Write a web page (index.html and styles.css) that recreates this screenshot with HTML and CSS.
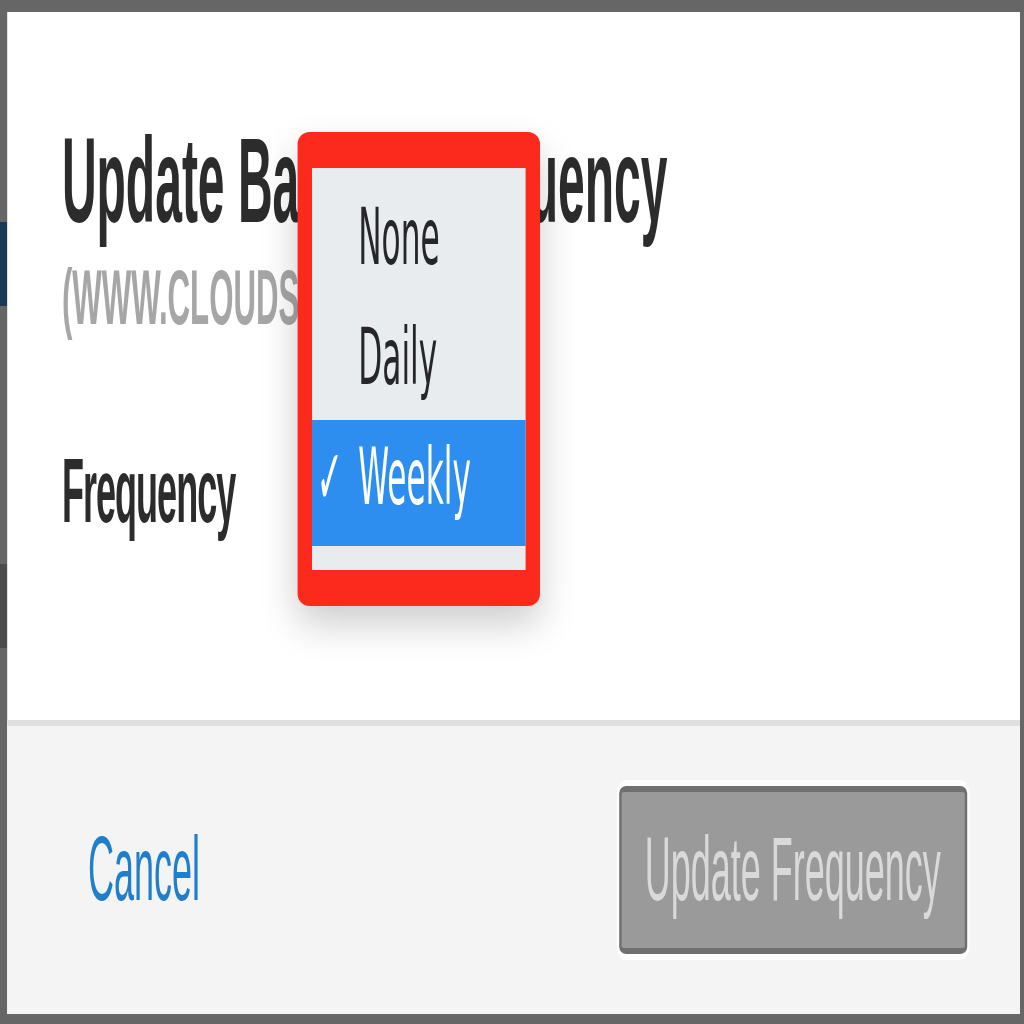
FILE: index.html
```html
<!DOCTYPE html>
<html lang="en">
<head>
<meta charset="utf-8">
<title>Update Backup Frequency</title>
<link rel="stylesheet" href="styles.css">
</head>
<body>
<div class="viewport">
  <div class="stage">
    <div class="backdrop-strip">
      <span class="strip-gap gap-a"></span>
      <span class="strip-navy"></span>
      <span class="strip-gap gap-b"></span>
      <span class="strip-dark"></span>
    </div>
    <div class="modal">
      <div class="modal-body">
        <h1 class="title">Update Backup Frequency</h1>
        <div class="subtitle">(WWW.CLOUDSITE.COM)</div>
        <div class="field">
          <label class="field-label">Frequency</label>
        </div>
        <ul class="menu">
          <li class="menu-item"><span class="check"></span><span>None</span></li>
          <li class="menu-item"><span class="check"></span><span>Daily</span></li>
          <li class="menu-item selected"><span class="check">✓</span><span>Weekly</span></li>
        </ul>
      </div>
      <div class="modal-footer">
        <a class="cancel" href="#">Cancel</a>
        <button class="btn-primary" disabled>Update Frequency</button>
      </div>
    </div>
  </div>
</div>
</body>
</html>
```
FILE: styles.css
```css
html, body {
  margin: 0;
  padding: 0;
  background: #666666;
  font-family: "Liberation Sans", Arial, sans-serif;
}

.viewport {
  width: 1024px;
  height: 1024px;
  overflow: hidden;
}

.stage {
  width: 426.667px;
  height: 170.667px;
  box-sizing: border-box;
  padding: 2px 1.25px 1.87px 0;
  display: flex;
  background: #666666;
  transform: scale(2.4, 6);
  transform-origin: 0 0;
}

.backdrop-strip {
  width: 3.1px;
  flex-shrink: 0;
  display: flex;
  flex-direction: column;
}
.strip-gap.gap-a { height: 34.7px; }
.strip-navy { height: 14.1px; background: #1c3a58; }
.strip-gap.gap-b { height: 43.7px; }
.strip-dark { height: 13.8px; background: #4c4c4c; }

.modal {
  flex: 1;
  background: #ffffff;
  display: flex;
  flex-direction: column;
  position: relative;
}

.modal-body {
  flex: 1;
  padding: 15.8px 22.7px 0;
}

.title {
  margin: 0;
  font-size: 20px;
  line-height: 24px;
  font-weight: 700;
  color: #2c2c2c;
}

.subtitle {
  font-size: 13px;
  line-height: 16px;
  font-weight: 700;
  color: #a6a6a6;
}

.field {
  margin-top: 14.5px;
}

.field-label {
  font-size: 15px;
  line-height: 20px;
  font-weight: 700;
  letter-spacing: -0.4px;
  color: #2c2c2c;
}

.menu {
  position: absolute;
  left: 121.2px;
  top: 20.2px;
  width: 88.7px;
  margin: 0;
  padding: 2.3px 0 4.1px;
  list-style: none;
  background: #e8ecef;
  border: 6px solid #fb2a1c;
  border-radius: 5px / 2px;
  box-shadow: 0 3px 10px rgba(0, 0, 0, 0.2);
  font-family: "DejaVu Sans", "Liberation Sans", sans-serif;
  font-size: 13px;
}

.menu-item {
  display: flex;
  height: 20px;
  line-height: 20px;
  padding-left: 1.7px;
  color: #262629;
}

.menu-item .check {
  width: 17.3px;
  flex-shrink: 0;
  font-weight: 700;
}

.menu-item.selected {
  height: 20.5px;
  background: #2d8ef0;
  color: #ffffff;
}

.modal-footer {
  height: 49.3px;
  box-sizing: border-box;
  flex-shrink: 0;
  border-top: 1px solid #e0e0e0;
  background: #f4f4f4;
  display: flex;
  align-items: center;
  justify-content: space-between;
  padding: 0 22.4px 0 33.6px;
}

.cancel {
  font-size: 15px;
  line-height: 20px;
  color: #1f7fcc;
  text-decoration: none;
}

.btn-primary {
  height: 28px;
  box-sizing: border-box;
  padding: 0 10px;
  border: 1px solid #6f6f6f;
  border-radius: 3px / 1.2px;
  background: #9a9a9a;
  color: #d9d9d9;
  font-family: "Liberation Sans", Arial, sans-serif;
  font-size: 15px;
  line-height: 26px;
  box-shadow: 0 0 0 1px rgba(255, 255, 255, 0.8);
}
```
